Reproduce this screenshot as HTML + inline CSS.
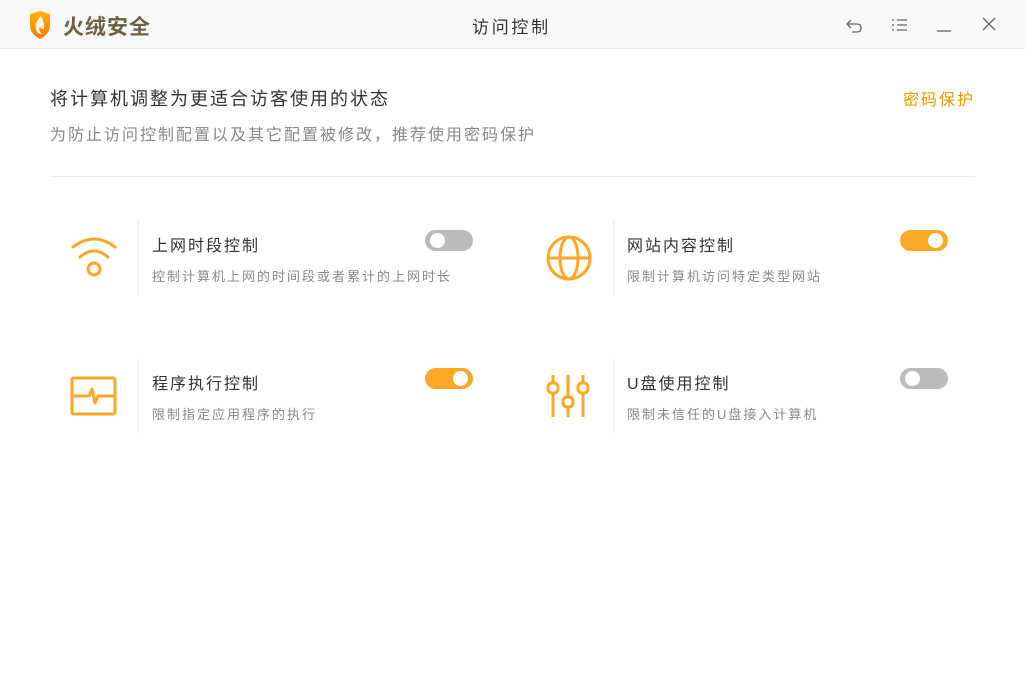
<!DOCTYPE html>
<html><head><meta charset="utf-8"><style>
*{margin:0;padding:0;box-sizing:border-box}
body{width:1025px;height:675px;background:#fff;font-family:"Liberation Sans","Noto Sans CJK SC",sans-serif;position:relative;overflow:hidden}
.top{position:absolute;left:0;top:0;width:1025px;height:49px;background:#f7f8f8;border-bottom:1px solid #ececec}
.abs{position:absolute;white-space:nowrap}
.t{font-size:16px;color:#333;letter-spacing:2px}
.d{font-size:13px;color:#888;letter-spacing:2px}
.vl{position:absolute;width:1px;background:#eee}
.tg{position:absolute;width:48px;height:21px;border-radius:11px}
.tg i{position:absolute;top:3px;width:15px;height:15px;border-radius:50%;background:#fff}
.on{background:#ffa726}.on i{right:5px}
.off{background:#bbb}.off i{left:5px}
</style></head><body>
<div class="top"></div>
<svg class="abs" style="left:28px;top:11px" width="24" height="28" viewBox="0 0 24 28"><defs><linearGradient id="g" x1="0" y1="0" x2="0" y2="1"><stop offset="0" stop-color="#ffb300"/><stop offset="1" stop-color="#f57c00"/></linearGradient></defs><path d="M2 3 L12 0 L22 3 L22 14 Q22 23 12 28 Q2 23 2 14Z" fill="url(#g)"/><path d="M13 5 Q6 12 8 19 Q10 24 14 23 Q10 20 12 15 Q13 19 16 18 Q17 12 13 5Z" fill="#fff" opacity=".9"/></svg>
<div class="abs" style="left:63px;top:11px;font-size:21px;font-weight:bold;color:#6f5f45;letter-spacing:1px">火绒安全</div>
<div class="abs" style="left:472px;top:13px;font-size:17px;color:#333;letter-spacing:2.7px">访问控制</div>
<svg class="abs" style="left:840px;top:12px" width="170" height="26" viewBox="0 0 170 26" fill="none" stroke="#666" stroke-width="1.3"><path d="M11 8 L7 12 L11 16 M7 12 H17 Q21 12 21 16 Q21 20 17 20 H12"/><path d="M52 8h2M52 13h2M52 18h2M57 8h10M57 13h10M57 18h10"/><path d="M97 19h14"/><path d="M143 6 L155 18 M155 6 L143 18"/></svg>
<div class="abs" style="left:50px;top:85px;font-size:18px;color:#333;letter-spacing:2px">将计算机调整为更适合访客使用的状态</div>
<div class="abs" style="left:50px;top:121px;font-size:16px;color:#888;letter-spacing:2px">为防止访问控制配置以及其它配置被修改，推荐使用密码保护</div>
<div class="abs" style="left:903px;top:86px;font-size:16px;color:#f39800;letter-spacing:2px">密码保护</div>
<div class="abs" style="left:50px;top:176px;width:925px;height:1px;background:#eee"></div>

<svg class="abs" style="left:70px;top:235px" width="48" height="46" viewBox="0 0 48 46" fill="none" stroke="#ffa726" stroke-width="3" stroke-linecap="round"><path d="M3 12 Q24 -4 45 12"/><path d="M10 22 Q24 10 38 22"/><circle cx="24" cy="34" r="6"/></svg>
<div class="vl" style="left:138px;top:220px;height:76px"></div>
<div class="abs t" style="left:152px;top:232px">上网时段控制</div>
<div class="abs d" style="left:152px;top:266px">控制计算机上网的时间段或者累计的上网时长</div>
<div class="tg off" style="left:425px;top:230px"><i></i></div>

<svg class="abs" style="left:545px;top:234px" width="48" height="48" viewBox="0 0 48 48" fill="none" stroke="#ffa726" stroke-width="3"><circle cx="24" cy="24" r="21"/><ellipse cx="24" cy="24" rx="9" ry="21"/><path d="M3 24h42"/></svg>
<div class="vl" style="left:613px;top:220px;height:76px"></div>
<div class="abs t" style="left:627px;top:232px">网站内容控制</div>
<div class="abs d" style="left:627px;top:266px">限制计算机访问特定类型网站</div>
<div class="tg on" style="left:900px;top:230px"><i></i></div>

<svg class="abs" style="left:70px;top:376px" width="48" height="40" viewBox="0 0 48 40" fill="none" stroke="#ffa726" stroke-width="3" stroke-linejoin="round"><rect x="2" y="2" width="43" height="36" rx="2"/><path d="M2 20 H19 L22 13 L25 27 L28 20 H45"/></svg>
<div class="vl" style="left:138px;top:358px;height:76px"></div>
<div class="abs t" style="left:152px;top:370px">程序执行控制</div>
<div class="abs d" style="left:152px;top:404px">限制指定应用程序的执行</div>
<div class="tg on" style="left:425px;top:368px"><i></i></div>

<svg class="abs" style="left:545px;top:373px" width="48" height="46" viewBox="0 0 48 46" fill="none" stroke="#ffa726" stroke-width="3"><path d="M8 2v8M8 20v24M23 2v22M23 34v10M38 2v8M38 20v24"/><rect x="3" y="10" width="10" height="10" rx="4"/><rect x="18" y="24" width="10" height="10" rx="4"/><rect x="33" y="10" width="10" height="10" rx="4"/></svg>
<div class="vl" style="left:613px;top:358px;height:76px"></div>
<div class="abs t" style="left:627px;top:370px">U盘使用控制</div>
<div class="abs d" style="left:627px;top:404px">限制未信任的U盘接入计算机</div>
<div class="tg off" style="left:900px;top:368px"><i></i></div>
</body></html>
